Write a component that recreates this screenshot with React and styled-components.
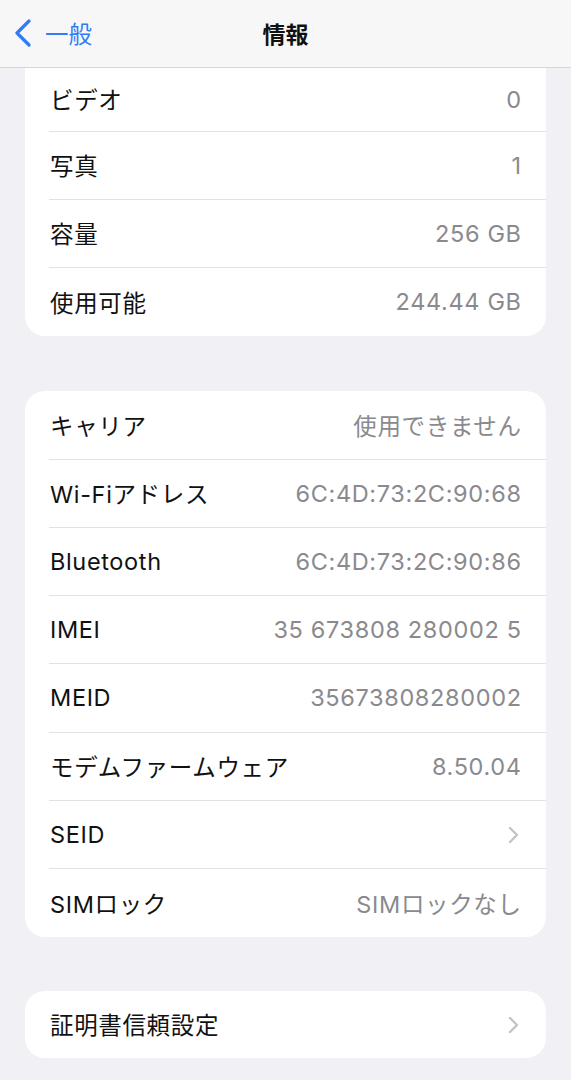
import React from "react";
import styled, { createGlobalStyle } from "styled-components";

const Global = createGlobalStyle`
  html, body { margin: 0; padding: 0; background: #f0f0f5; }
  body {
    font-family: Inter, "Noto Sans CJK JP", sans-serif;
    -webkit-font-smoothing: antialiased;
  }
`;

const Page = styled.div`
  width: 571px;
  min-height: 1080px;
  background: #f0f0f5;
  overflow: hidden;
`;

const NavBar = styled.header`
  height: 67px;
  background: #f7f7f7;
  border-bottom: 1px solid #d6d6d8;
  display: grid;
  grid-template-columns: 1fr auto 1fr;
  align-items: center;
  padding: 0 14px;
`;

const BackButton = styled.div`
  display: flex;
  align-items: center;
  gap: 13px;
  color: #2f7cf6;
  font-size: 23.5px;
  margin-top: -1px;
`;

const Title = styled.h1`
  margin: 0;
  font-size: 23px;
  font-weight: 700;
  color: #111;
  margin-top: -1px;
`;

const Content = styled.main`
  padding: 0 25px 0 25px;
  display: flex;
  flex-direction: column;
`;

const Card = styled.section`
  background: #fff;
  border-radius: ${(p) => (p.$flushTop ? "0 0 20px 20px" : "20px")};
  margin-top: ${(p) => p.$gap}px;
  overflow: hidden;
`;

const Row = styled.div`
  position: relative;
  height: ${(p) => p.$h || 68.25}px;
  display: flex;
  align-items: center;
  justify-content: space-between;
  padding: 0 25px 0 25px;
  box-sizing: border-box;
  &:not(:last-child)::after {
    content: "";
    position: absolute;
    left: 24px;
    right: 0;
    bottom: 0;
    height: 1px;
    background: #e2e2e5;
  }
`;

const Label = styled.span`
  font-size: 23.5px;
  color: #111;
  letter-spacing: 0.65px;
  margin-top: -1px;
`;

const Value = styled.span`
  font-size: 23.5px;
  color: #8a8a8e;
  letter-spacing: 0.65px;
  margin-right: -0.65px;
  margin-top: -1px;
`;

const Chevron = () => (
  <svg width="11" height="18" viewBox="0 0 11 18" style={{ marginRight: 2 }}>
    <path d="M2 2 L9 9 L2 16" fill="none" stroke="#c3c3c7" strokeWidth="2.4" strokeLinecap="round" strokeLinejoin="round" />
  </svg>
);

const BackChevron = () => (
  <svg width="18" height="28" viewBox="0 0 18 28">
    <path d="M15 2 L3 14 L15 26" fill="none" stroke="#2f7cf6" strokeWidth="3.2" strokeLinecap="round" strokeLinejoin="round" />
  </svg>
);

const group1 = [
  ["ビデオ", "0"],
  ["写真", "1"],
  ["容量", "256 GB"],
  ["使用可能", "244.44 GB"],
];

const group2 = [
  ["キャリア", "使用できません"],
  ["Wi-Fiアドレス", "6C:4D:73:2C:90:68"],
  ["Bluetooth", "6C:4D:73:2C:90:86"],
  ["IMEI", "35 673808 280002 5"],
  ["MEID", "35673808280002"],
  ["モデムファームウェア", "8.50.04"],
  ["SEID", null],
  ["SIMロック", "SIMロックなし"],
];

export default function App() {
  return (
    <Page>
      <Global />
      <NavBar>
        <BackButton>
          <BackChevron />
          <span>一般</span>
        </BackButton>
        <Title>情報</Title>
        <div />
      </NavBar>
      <Content>
        <Card $flushTop $gap={0}>
          {group1.map(([l, v], i) => (
            <Row key={l} $h={i === 0 ? 63.5 : undefined}>
              <Label>{l}</Label>
              <Value>{v}</Value>
            </Row>
          ))}
        </Card>
        <Card $gap={55}>
          {group2.map(([l, v]) => (
            <Row key={l}>
              <Label>{l}</Label>
              {v === null ? <Chevron /> : <Value>{v}</Value>}
            </Row>
          ))}
        </Card>
        <Card $gap={54}>
          <Row $h={67}>
            <Label>証明書信頼設定</Label>
            <Chevron />
          </Row>
        </Card>
      </Content>
    </Page>
  );
}
